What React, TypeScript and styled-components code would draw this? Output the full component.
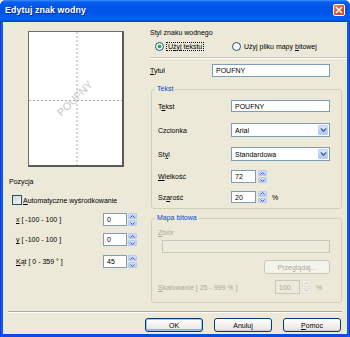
import React from "react";
import styled, { createGlobalStyle } from "styled-components";

const GlobalStyle = createGlobalStyle`
  html, body {
    margin: 0;
    padding: 0;
    background: #ffffff;
  }
  body {
    font-family: "Liberation Sans", Arial, sans-serif;
    font-size: 7px;
    color: #000000;
  }
`;

const Window = styled.div`
  width: 350px;
  height: 337px;
  display: flex;
  flex-direction: column;
  background: linear-gradient(to right, #0831d9 0px, #166aee 2px, #0a4be0 3px, #0a4be0 347px, #166aee 348px, #0831d9 350px);
  border-radius: 6px 6px 0 0;
  overflow: hidden;
`;

const TitleBar = styled.div`
  height: 22px;
  flex: none;
  display: flex;
  align-items: flex-start;
  justify-content: space-between;
  padding: 0 5px 0 5px;
  background: linear-gradient(
    to bottom,
    #3b8eff 0%,
    #0a5ff0 9%,
    #0056e8 30%,
    #0052e6 55%,
    #0061f8 85%,
    #004fdc 94%,
    #003fc8 100%
  );
`;

const Title = styled.span`
  margin-top: 5px;
  color: #ffffff;
  font-family: "Liberation Sans", Arial, sans-serif;
  font-weight: bold;
  font-size: 8.8px;
  letter-spacing: 0.1px;
  text-shadow: 1px 1px 0 #0c2a8a;
`;

const CloseButton = styled.div`
  margin-top: 4px;
  width: 12px;
  height: 12px;
  box-sizing: border-box;
  border: 1px solid #ffffff;
  border-radius: 2px;
  background: linear-gradient(135deg, #f0906e 0%, #e2582f 45%, #c5401a 100%);
  display: flex;
  align-items: center;
  justify-content: center;
`;

const Frame = styled.div`
  flex: 1;
  margin: 0 3px 3px;
  background: #ece9d8;
  display: flex;
  flex-direction: column;
`;

const Columns = styled.div`
  height: 289px;
  flex: none;
  display: flex;
`;

const LeftCol = styled.div`
  width: 145px;
  flex: none;
  display: flex;
  flex-direction: column;
`;

const RightCol = styled.div`
  width: 198px;
  flex: none;
  display: flex;
  flex-direction: column;
`;

const Page = styled.div`
  margin: 9px 0 0 25px;
  width: 96px;
  height: 136px;
  box-sizing: border-box;
  background: #ffffff;
  border-left: 1px solid #6e6e6e;
  border-top: 1px solid #6e6e6e;
  border-right: 2px solid #5a5a5a;
  border-bottom: 2px solid #5a5a5a;
`;

const Text = styled.div<{ $mt?: number; $pl?: number; $disabled?: boolean }>`
  margin-top: ${(p) => p.$mt ?? 0}px;
  padding-left: ${(p) => p.$pl ?? 0}px;
  height: 10px;
  line-height: 10px;
  white-space: nowrap;
  color: ${(p) => (p.$disabled ? "#aca899" : "#000000")};
`;

const Row = styled.div<{ $mt?: number; $pl?: number; $h?: number }>`
  margin-top: ${(p) => p.$mt ?? 0}px;
  padding-left: ${(p) => p.$pl ?? 0}px;
  height: ${(p) => p.$h ?? 13}px;
  display: flex;
  align-items: center;
  white-space: nowrap;
`;

const Label = styled.span<{ $w: number; $disabled?: boolean }>`
  width: ${(p) => p.$w}px;
  flex: none;
  color: ${(p) => (p.$disabled ? "#aca899" : "#000000")};
`;

const Input = styled.div<{ $w: number; $disabled?: boolean }>`
  width: ${(p) => p.$w}px;
  height: 100%;
  flex: none;
  box-sizing: border-box;
  border: 1px solid ${(p) => (p.$disabled ? "#c9c7ba" : "#7f9db9")};
  background: ${(p) => (p.$disabled ? "#ebeadb" : "#ffffff")};
  color: ${(p) => (p.$disabled ? "#aca899" : "#000000")};
  padding-left: 3px;
  display: flex;
  align-items: center;
`;

const SelectBox = styled(Input)`
  justify-content: space-between;
  padding-right: 1px;
`;

const DropButton = styled.div`
  width: 10px;
  height: calc(100% - 2px);
  box-sizing: border-box;
  border: 1px solid #b9cdf7;
  border-radius: 1px;
  background: linear-gradient(to bottom, #dde8fe 0%, #c2d3fc 60%, #b3c8f7 100%);
  display: flex;
  align-items: center;
  justify-content: center;
`;

const Spin = styled.div<{ $ml?: number }>`
  margin-left: ${(p) => p.$ml ?? 1}px;
  width: 9px;
  height: 100%;
  flex: none;
  display: flex;
  flex-direction: column;
  gap: 1px;
`;

const SpinHalf = styled.div<{ $disabled?: boolean }>`
  flex: 1;
  box-sizing: border-box;
  border-radius: 1px;
  border: 1px solid ${(p) => (p.$disabled ? "#e4e2d6" : "#b7caf5")};
  background: ${(p) =>
    p.$disabled
      ? "#f0efe6"
      : "linear-gradient(to bottom, #d2dffc 0%, #b4c8f6 100%)"};
  display: flex;
  align-items: center;
  justify-content: center;
`;

const Unit = styled.span<{ $disabled?: boolean }>`
  margin-left: 5px;
  color: ${(p) => (p.$disabled ? "#aca899" : "#000000")};
`;

const CheckBox = styled.span`
  width: 10px;
  height: 10px;
  box-sizing: border-box;
  flex: none;
  border: 1px solid #1c5180;
  background: linear-gradient(135deg, #d6d5cc 0%, #eeeee8 70%, #fbfbf9 100%);
  margin-right: 1px;
`;

const RadioItem = styled.div<{ $w?: number }>`
  width: ${(p) => (p.$w ? `${p.$w}px` : "auto")};
  display: flex;
  align-items: center;
`;

const Radio = styled.span<{ $checked?: boolean }>`
  width: 9px;
  height: 9px;
  box-sizing: border-box;
  flex: none;
  border-radius: 50%;
  border: 1px solid #1c5180;
  background: #ffffff;
  display: flex;
  align-items: center;
  justify-content: center;
  margin-right: 3px;

  &::after {
    content: "";
    width: 3px;
    height: 3px;
    border-radius: 50%;
    background: ${(p) => (p.$checked ? "#2aab2a" : "transparent")};
    box-shadow: ${(p) => (p.$checked ? "0 0 0 0.5px #56c456" : "none")};
  }
`;

const Focused = styled.span`
  outline: 1px dotted #000000;
  outline-offset: 0;
  padding: 0 1px;
`;

const Groove = styled.div`
  margin: 5px 0 0 2px;
  width: 196px;
  height: 2px;
  box-sizing: border-box;
  border-top: 1px solid #c5c2b2;
  border-bottom: 1px solid #ffffff;
`;

const Group = styled.fieldset<{ $mt: number; $pb: number }>`
  margin: ${(p) => p.$mt}px 0 0 3px;
  width: 191px;
  min-width: 0;
  box-sizing: border-box;
  padding: 0 0 ${(p) => p.$pb}px 6px;
  border: 1px solid #d0d0bf;
  border-radius: 3px;
  display: flex;
  flex-direction: column;
`;

const Legend = styled.legend`
  margin-left: -3px;
  padding: 0 2px;
  height: 10px;
  line-height: 10px;
  color: #0046d5;
`;

const Button = styled.div<{ $default?: boolean; $disabled?: boolean; $w?: number }>`
  width: ${(p) => p.$w ?? 58}px;
  height: 14px;
  box-sizing: border-box;
  border: 1px solid ${(p) => (p.$disabled ? "#c9c7ba" : "#003c74")};
  border-radius: 3px;
  background: ${(p) =>
    p.$disabled
      ? "#f5f4ea"
      : "linear-gradient(to bottom, #ffffff 0%, #f4f3ee 45%, #eceae3 80%, #d6d0c5 100%)"};
  box-shadow: ${(p) =>
    p.$default ? "inset 0 0 0 1px #a6c3f0, inset 0 -1px 0 1px #8aabe5" : "none"};
  color: ${(p) => (p.$disabled ? "#aca899" : "#000000")};
  display: flex;
  align-items: center;
  justify-content: center;
`;

const Separator = styled.div`
  margin: 0 5px;
  height: 2px;
  box-sizing: border-box;
  border-top: 1px solid #aca899;
  border-bottom: 1px solid #ffffff;
`;

const ButtonRow = styled.div`
  margin-top: 5px;
  padding-right: 6px;
  display: flex;
  justify-content: flex-end;
  gap: 11px;
`;

const Chevron = ({ up, color = "#4d6185" }: { up?: boolean; color?: string }) => (
  <svg width="5" height="3" viewBox="0 0 5 3">
    <path
      d={up ? "M0.5 2.5 L2.5 0.5 L4.5 2.5" : "M0.5 0.5 L2.5 2.5 L4.5 0.5"}
      fill="none"
      stroke={color}
      strokeWidth="1"
    />
  </svg>
);

const SpinButtons = ({ ml, disabled }: { ml?: number; disabled?: boolean }) => (
  <Spin $ml={ml}>
    <SpinHalf $disabled={disabled}>
      <Chevron up color={disabled ? "#c2c0b4" : "#4d6185"} />
    </SpinHalf>
    <SpinHalf $disabled={disabled}>
      <Chevron color={disabled ? "#c2c0b4" : "#4d6185"} />
    </SpinHalf>
  </Spin>
);

const Select = ({ value }: { value: string }) => (
  <SelectBox $w={99}>
    <span>{value}</span>
    <DropButton>
      <svg width="7" height="4" viewBox="0 0 7 4">
        <path d="M0.8 0.6 L3.5 3.2 L6.2 0.6" fill="none" stroke="#4d6185" strokeWidth="1.4" />
      </svg>
    </DropButton>
  </SelectBox>
);

const PagePreview = () => (
  <Page>
    <svg width="93" height="133" viewBox="0 0 93 133">
      <line x1="48" y1="0" x2="48" y2="133" stroke="#a8a8a8" strokeDasharray="2 2" />
      <line x1="0" y1="68.5" x2="93" y2="68.5" stroke="#a8a8a8" strokeDasharray="2 2" />
      <text
        x="46.5"
        y="67"
        fill="#c6c6c6"
        fontFamily="Liberation Sans, Arial, sans-serif"
        fontSize="10.8"
        textAnchor="middle"
        dominantBaseline="middle"
        transform="rotate(-45 46.5 67)"
      >
        POUFNY
      </text>
    </svg>
  </Page>
);

const positionRows = [
  { key: "x", label: <><u>x</u> [ -100 - 100 ]</>, value: "0", mt: 7 },
  { key: "y", label: <><u>y</u> [ -100 - 100 ]</>, value: "0", mt: 7 },
  { key: "k", label: <><u>K</u>ąt [ 0 - 359 ° ]</>, value: "45", mt: 9 },
];

export default function App() {
  return (
    <>
      <GlobalStyle />
      <Window>
        <TitleBar>
          <Title>Edytuj znak wodny</Title>
          <CloseButton>
            <svg width="8" height="8" viewBox="0 0 8 8">
              <path d="M1 1 L7 7 M7 1 L1 7" stroke="#ffffff" strokeWidth="1.6" />
            </svg>
          </CloseButton>
        </TitleBar>
        <Frame>
          <Columns>
            <LeftCol>
              <PagePreview />
              <Text $mt={10} $pl={6}>
                Pozycja
              </Text>
              <Row $mt={7} $pl={9} $h={12}>
                <CheckBox />
                <span>
                  <u>A</u>utomatyczne wyśrodkowanie
                </span>
              </Row>
              {positionRows.map((r) => (
                <Row key={r.key} $mt={r.mt} $pl={13}>
                  <Label $w={87}>{r.label}</Label>
                  <Input $w={24}>{r.value}</Input>
                  <SpinButtons />
                </Row>
              ))}
            </LeftCol>

            <RightCol>
              <Text $mt={6} $pl={2}>
                Styl znaku wodnego
              </Text>
              <Row $mt={2} $pl={7} $h={12}>
                <RadioItem $w={77}>
                  <Radio $checked />
                  <Focused>
                    U<u>ż</u>yj tekstu
                  </Focused>
                </RadioItem>
                <RadioItem>
                  <Radio />
                  <span>
                    Użyj pliku mapy <u>b</u>itowej
                  </span>
                </RadioItem>
              </Row>
              <Groove />
              <Row $mt={5} $pl={2}>
                <Label $w={62}>
                  <u>T</u>ytuł
                </Label>
                <Input $w={118}>POUFNY</Input>
              </Row>

              <Group $mt={7} $pb={5}>
                <Legend>Tekst</Legend>
                <Row $mt={6} $h={12}>
                  <Label $w={73}>
                    T<u>e</u>kst
                  </Label>
                  <Input $w={99}>POUFNY</Input>
                </Row>
                <Row $mt={11} $h={14}>
                  <Label $w={73}>Czcionka</Label>
                  <Select value="Arial" />
                </Row>
                <Row $mt={10} $h={14}>
                  <Label $w={73}>
                    St<u>y</u>l
                  </Label>
                  <Select value="Standardowa" />
                </Row>
                <Row $mt={9}>
                  <Label $w={73}>
                    <u>W</u>ielkość
                  </Label>
                  <Input $w={25}>72</Input>
                  <SpinButtons ml={2} />
                </Row>
                <Row $mt={8} $h={12}>
                  <Label $w={73}>
                    Sz<u>a</u>rość
                  </Label>
                  <Input $w={25}>20</Input>
                  <SpinButtons ml={2} />
                  <Unit>%</Unit>
                </Row>
              </Group>

              <Group $mt={4} $pb={8}>
                <Legend>Mapa bitowa</Legend>
                <Text $mt={5} $disabled>
                  <u>Z</u>biór
                </Text>
                <Row $mt={2} $pl={4}>
                  <Input $w={168} $disabled />
                </Row>
                <Row $mt={8} $pl={106} $h={12}>
                  <Button $disabled $w={66}>
                    Przeglądaj...
                  </Button>
                </Row>
                <Row $mt={7} $h={14}>
                  <Label $w={117} $disabled>
                    <u>S</u>kalowanie [ 25 - 999 % ]
                  </Label>
                  <Input $w={25} $disabled>
                    100
                  </Input>
                  <SpinButtons ml={2} disabled />
                  <Unit $disabled>%</Unit>
                </Row>
              </Group>
            </RightCol>
          </Columns>

          <Separator />
          <ButtonRow>
            <Button $default>OK</Button>
            <Button>Anuluj</Button>
            <Button>
              <span>
                <u>P</u>omoc
              </span>
            </Button>
          </ButtonRow>
        </Frame>
      </Window>
    </>
  );
}
